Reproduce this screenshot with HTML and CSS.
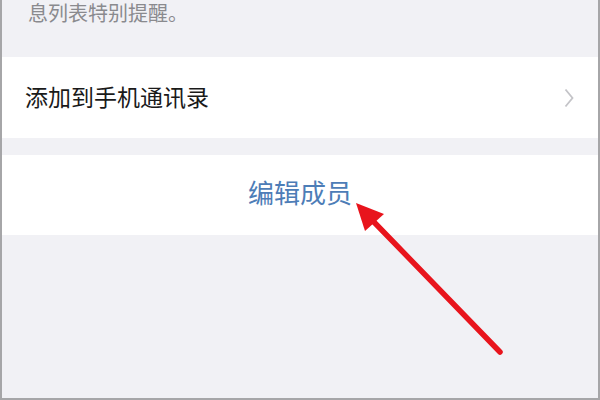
FILE: index.html
```html
<!DOCTYPE html>
<html lang="zh-CN">
<head>
    <meta charset="UTF-8">
    <meta name="viewport" content="width=device-width, initial-scale=1.0">
    <title>群成员设置</title>
    <link rel="stylesheet" href="styles.css">
</head>
<body>
    <div class="screen">
        <div class="caption">息列表特别提醒。</div>
        <div class="row">
            <span class="row-title">添加到手机通讯录</span>
            <svg class="chevron" width="10" height="20" viewBox="0 0 10 20">
                <path d="M1.5 1.5 L8.5 10 L1.5 18.5" fill="none" stroke="#c4c4c8" stroke-width="1.8"/>
            </svg>
        </div>
        <div class="row action">编辑成员</div>

        <!-- annotation arrow over the screenshot -->
        <svg class="arrow" width="600" height="400" viewBox="0 0 600 400">
            <line x1="500" y1="352" x2="372" y2="220" stroke="#e8141c" stroke-width="5.5" stroke-linecap="round"/>
            <polygon points="356,203 365,231 384,214" fill="#e8141c"/>
        </svg>
    </div>
</body>
</html>
```

FILE: styles.css
```css
body {
    margin: 0;
    font-family: "Noto Sans CJK SC", "Noto Sans", sans-serif;
}

.screen {
    position: relative;
    width: 600px;
    height: 400px;
    box-sizing: border-box;
    border: 2px solid #a6a6a8;
    border-top: none;
    background-color: #f1f1f5;
    overflow: hidden;
}

.caption {
    height: 57px;
    padding-left: 26px;
    font-size: 20px;
    line-height: 26px;
    color: #8a8a8e;
}

.row {
    display: flex;
    align-items: center;
    height: 81px;
    box-sizing: border-box;
    padding: 0 24px 0 23px;
    background-color: #ffffff;
}

.row-title {
    flex: 1;
    margin-bottom: 4px;
    font-size: 23px;
    color: #1a1a1a;
}

.chevron {
    display: block;
}

.row.action {
    justify-content: center;
    height: 80px;
    margin-top: 17px;
    padding: 0 0 8px;
    font-size: 26px;
    color: #4d7db7;
}

.arrow {
    position: absolute;
    left: -2px;
    top: 0;
}
```
